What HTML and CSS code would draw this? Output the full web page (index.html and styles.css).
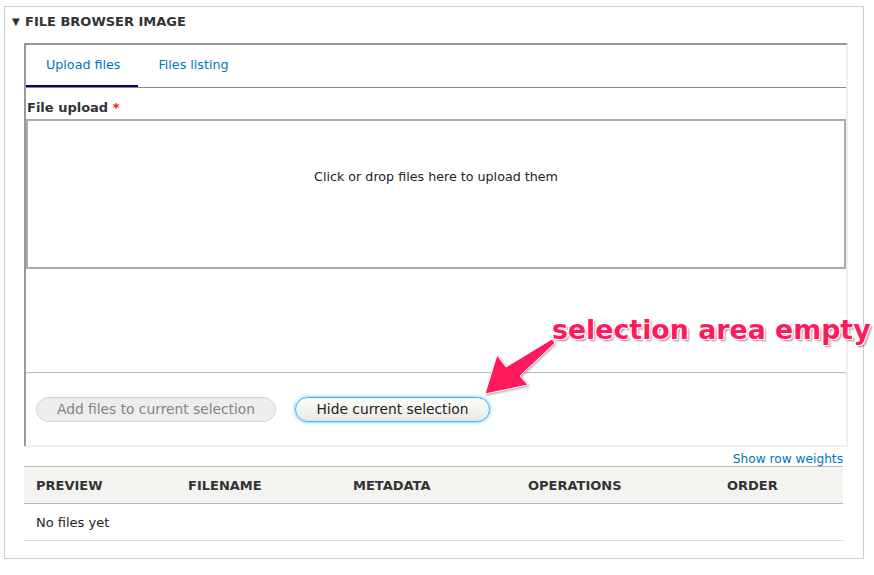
FILE: index.html
```html
<!DOCTYPE html>
<html>
<head>
<meta charset="utf-8">
<link rel="stylesheet" href="styles.css">
</head>
<body>
<div class="page">
  <section class="fieldset">
    <div class="summary"><span class="tri">▼</span>FILE BROWSER IMAGE</div>
    <div class="browser">
      <nav class="tabs">
        <a class="tab active">Upload files</a>
        <a class="tab">Files listing</a>
      </nav>
      <div class="upload">
        <div class="label">File upload <span class="req">*</span></div>
        <div class="dropzone">Click or drop files here to upload them</div>
        <div class="selection"></div>
        <div class="actions">
          <button class="btn disabled" disabled>Add files to current selection</button>
          <button class="btn focus">Hide current selection</button>
        </div>
      </div>
    </div>
    <div class="weights"><a>Show row weights</a></div>
    <table class="files">
      <colgroup>
        <col class="c1"><col class="c2"><col class="c3"><col class="c4"><col class="c5">
      </colgroup>
      <thead>
        <tr>
          <th>PREVIEW</th>
          <th>FILENAME</th>
          <th>METADATA</th>
          <th>OPERATIONS</th>
          <th>ORDER</th>
        </tr>
      </thead>
      <tbody>
        <tr><td colspan="5">No files yet</td></tr>
      </tbody>
    </table>
  </section>
  <div class="annotation">
    <svg class="arrow" width="80" height="70" viewBox="0 0 80 70">
      <path d="M70 3 L73 7 L38 40 L46 49 L3 58 L15 19 L24 31 Z" fill="#ff1a5e" stroke="#fff" stroke-width="1" />
    </svg>
    <span class="note">selection area empty</span>
  </div>
</div>
</body>
</html>
```
FILE: styles.css
```css
html, body {
  margin: 0;
  padding: 0;
  background: #fff;
}
body {
  font-family: "DejaVu Sans", sans-serif;
  font-size: 13px;
  color: #222;
}
.page {
  position: relative;
  width: 874px;
  height: 575px;
}
.fieldset {
  position: absolute;
  left: 4px;
  top: 6px;
  width: 824px;
  height: 544px;
  border: 1px solid #ccc;
  padding: 7px 15px 0 19px;
}
.summary {
  font-weight: bold;
  font-size: 13px;
  line-height: 16px;
  color: #333;
  margin: 0 0 13px -12px;
  display: flex;
  align-items: center;
}
.tri {
  font-size: 10px;
  width: 13px;
  display: inline-block;
  font-weight: normal;
}
.browser {
  border-style: solid;
  border-width: 2px;
  border-color: #999 #eee #eee #999;
}
.tabs {
  display: flex;
  border-bottom: 1px solid #888;
  height: 42px;
}
.tab {
  color: #0074bd;
  font-size: 12.7px;
  line-height: 40px;
  padding: 0 18px 0 20px;
  white-space: nowrap;
  border-bottom: 2px solid transparent;
}
.tab.active {
  border-bottom-color: #00007f;
}
.label {
  font-weight: bold;
  color: #333;
  line-height: 16px;
  margin: 12px 0 3px 1px;
}
.req {
  color: #e62600;
}
.dropzone {
  border: 2px solid #aaa;
  height: 98px;
  padding-top: 48px;
  text-align: center;
  line-height: 16px;
  font-size: 12.7px;
  color: #222;
}
.selection {
  height: 103px;
  border-bottom: 1px solid #bbb;
}
.actions {
  display: flex;
  gap: 19px;
  padding: 24px 10px 23px 10px;
}
.btn {
  font-family: "DejaVu Sans", sans-serif;
  font-size: 13.8px;
  height: 25px;
  border-radius: 13px;
  padding: 0 10px;
  line-height: 23px;
  white-space: nowrap;
}
.btn.disabled {
  width: 240px;
  background: #ededed;
  border: 1px solid #d4d4d4;
  color: #848484;
}
.btn.focus {
  width: 195px;
  background: linear-gradient(#fdfdfb, #e8e8e2);
  border: 1px solid #40b0ff;
  box-shadow: 0 0 3px 1px rgba(64, 182, 255, 0.55);
  color: #222;
}
.weights {
  text-align: right;
  width: 819px;
  line-height: 16px;
  margin-top: 4px;
}
.weights a {
  color: #0074bd;
  font-size: 12.2px;
}
.files {
  width: 819px;
  border-collapse: collapse;
  table-layout: fixed;
  margin-top: -1px;
}
.c1 { width: 152px; }
.c2 { width: 165px; }
.c3 { width: 175px; }
.c4 { width: 199px; }
.c5 { width: 128px; }
.files th {
  background: #f3f3ef;
  text-align: left;
  font-weight: bold;
  color: #333;
  font-size: 13px;
  height: 36px;
  padding: 0 12px;
  border-top: 1px solid #bbb;
  border-bottom: 1px solid #bbb;
}
.files td {
  height: 36px;
  padding: 0 12px;
  border-bottom: 1px solid #ddd;
  color: #222;
}
.annotation {
  position: absolute;
  left: 480px;
  top: 310px;
  width: 394px;
  height: 90px;
}
.arrow {
  position: absolute;
  left: 2px;
  top: 26px;
  filter: drop-shadow(1px 1px 1px rgba(0,0,0,0.35));
}
.note {
  position: absolute;
  left: 72px;
  top: 2px;
  font-family: "DejaVu Sans", sans-serif;
  font-weight: bold;
  font-size: 26.8px;
  line-height: 36px;
  color: #ff1a5e;
  white-space: nowrap;
  text-shadow: -1px -1px 0 #fff, 1px -1px 0 #fff, -1px 1px 0 #fff, 1px 1px 0 #fff, 2px 2px 2px rgba(0,0,0,0.45);
}
```
